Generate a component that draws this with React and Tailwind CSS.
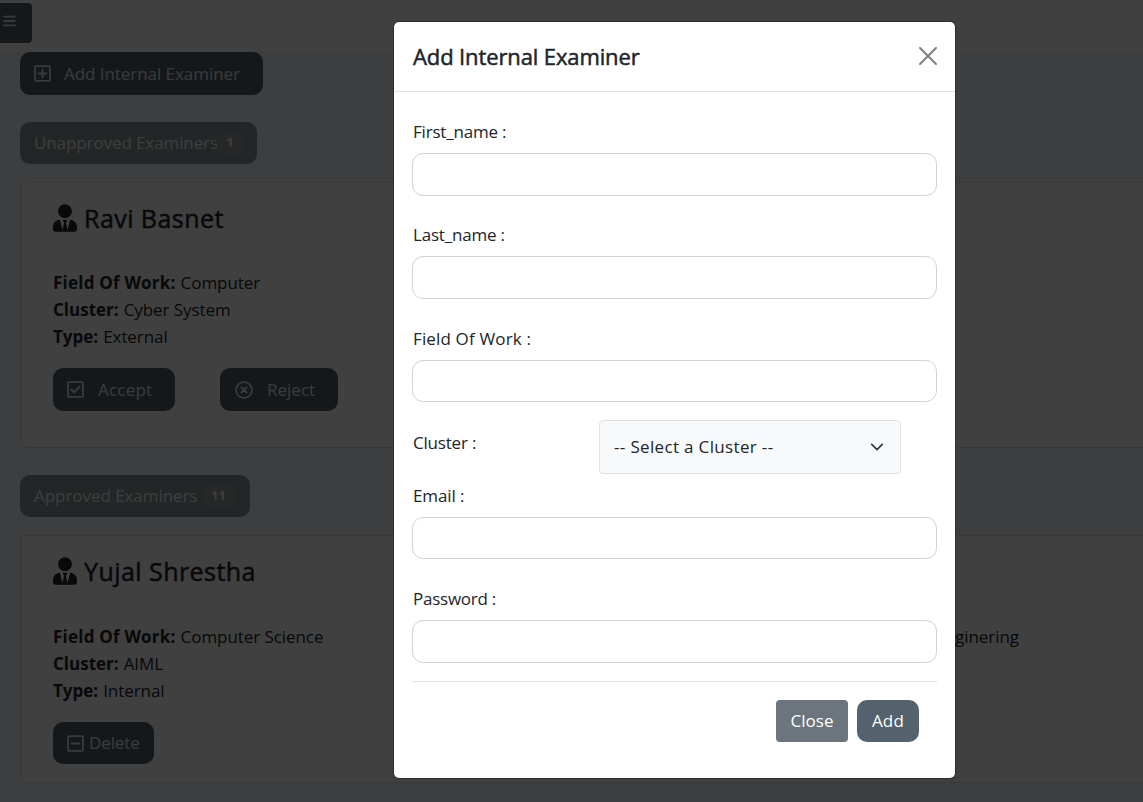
import {
  FaUserTie,
  FaBars,
  FaRegPlusSquare,
  FaRegCheckSquare,
  FaRegMinusSquare,
  FaRegTimesCircle,
} from "react-icons/fa";

const button = "flex items-center rounded-[10px] bg-[#53626c] text-[#e8e8e8]";

function Pill({ className, label, labelClass, count, badgeClass }) {
  return (
    <div className={`flex h-[42px] items-center rounded-[10px] bg-[#8a979d] pl-[14px] text-[#f4f4f4] ${className}`}>
      <span className={labelClass}>{label}</span>
      <span className={`flex h-[23px] items-center justify-center rounded-md bg-[#979da2] text-[13px] font-bold ${badgeClass}`}>{count}</span>
    </div>
  );
}

function Row({ label, labelClass = "", value }) {
  return (
    <p className="flex h-[27px] items-center">
      <b className={`block ${labelClass}`}>{label}</b>
      <span className="ml-[5px] tracking-[-0.07px]">{value}</span>
    </p>
  );
}

function Name({ children }) {
  return (
    <h2 className="flex h-[32px] items-center text-[25px] font-medium">
      <FaUserTie className="mb-[2px] h-[28px] w-[24px] shrink-0" />
      <span className="ml-[7px] tracking-[0.45px] [-webkit-text-stroke:0.5px_currentColor]">{children}</span>
    </h2>
  );
}

function Field({ label, className, labelClass, inputClass }) {
  return (
    <label className={`block ${className}`}>
      <span className={`block h-[27px] pl-px leading-[27px] ${labelClass}`}>{label}</span>
      <input className={`mt-[8px] block w-full rounded-[11px] border border-[#ced4da] bg-white px-3 ${inputClass}`} />
    </label>
  );
}

function Page() {
  return (
    <div className="h-full w-full overflow-hidden bg-[#f4f6f9]">
      <header className="flex h-[52px] items-start bg-white pt-[3px]">
        <div className="flex h-[40px] w-[32px] rounded-r-[4px] bg-[#53626c] pl-[3px] pt-[11px] text-[#e8e8e8]">
          <FaBars className="h-[14px] w-[13px]" />
        </div>
      </header>
      <main className="pl-[20px]">
        <div className={`${button} h-[43px] w-[243px] pl-[14px]`}>
          <FaRegPlusSquare className="h-[19px] w-[17px]" />
          <span className="ml-[13px] tracking-[-0.05px]">Add Internal Examiner</span>
        </div>
        <Pill className="mt-[27px] w-[237px]" label="Unapproved Examiners" labelClass="w-[183px] tracking-[-0.1px]" count="1" badgeClass="w-[26px]" />
        <section className="ml-px mt-[18px] h-[266px] w-[1190px] rounded-[4px] border border-[#e0e0e0] bg-white pl-[31px] pt-[20px]">
          <Name>Ravi Basnet</Name>
          <div className="mt-[34px]">
            <Row label="Field Of Work:" labelClass="tracking-[0.22px]" value="Computer" />
            <Row label="Cluster:" value="Cyber System" />
            <Row label="Type:" value="External" />
          </div>
          <div className="mt-[18px] flex gap-[45px]">
            <div className={`${button} h-[43px] w-[122px] pl-[14px]`}>
              <FaRegCheckSquare className="h-[19px] w-[17px]" />
              <span className="ml-[14px] tracking-[0.2px]">Accept</span>
            </div>
            <div className={`${button} h-[43px] w-[118px] pl-[15px]`}>
              <FaRegTimesCircle className="h-[18px] w-[18px]" />
              <span className="ml-[14px]">Reject</span>
            </div>
          </div>
        </section>
        <Pill className="mt-[27px] w-[230px]" label="Approved Examiners" labelClass="w-[168px] tracking-[-0.05px]" count="11" badgeClass="w-[33px]" />
        <section className="ml-px mt-[18px] h-[248px] w-[1190px] rounded-[4px] border border-[#e0e0e0] bg-white pl-[31px] pt-[20px]">
          <Name>Yujal Shrestha</Name>
          <div className="mt-[35px] flex">
            <div className="w-[674px]">
              <Row label="Field Of Work:" labelClass="tracking-[0.22px]" value="Computer Science" />
              <Row label="Cluster:" value="AIML" />
              <Row label="Type:" value="Internal" />
            </div>
            <Row label="Field Of Work:" value="Computer Enginering" />
          </div>
          <div className={`${button} mt-[18px] h-[42px] w-[101px] pl-[14px]`}>
            <FaRegMinusSquare className="h-[19px] w-[17px]" />
            <span className="ml-[5px] tracking-[-0.1px]">Delete</span>
          </div>
        </section>
      </main>
    </div>
  );
}

function Modal() {
  return (
    <div className="absolute left-[394px] top-[22px] h-[756px] w-[561px] rounded-[5px] bg-white shadow-[0_0_1px_1px_rgba(0,0,0,0.25)]">
      <div className="flex h-[70px] items-center justify-between border-b border-[#dee2e6] px-[18px]">
        <h1 className="pl-px text-[22px] font-medium tracking-[-0.12px] [-webkit-text-stroke:0.5px_currentColor]">Add Internal Examiner</h1>
        <svg className="mb-[2px] h-[18px] w-[18px]" viewBox="0 0 18 18" stroke="#7f7f7f" strokeWidth="2" strokeLinecap="round">
          <path d="M1 1 17 17M17 1 1 17" />
        </svg>
      </div>
      <form className="px-[18px]">
        <Field label="First_name :" className="mt-[26px]" labelClass="tracking-[-0.2px]" inputClass="h-[43px]" />
        <Field label="Last_name :" className="mt-[25px]" labelClass="tracking-[-0.2px]" inputClass="h-[43px]" />
        <Field label="Field Of Work :" className="mt-[26px]" labelClass="tracking-[0.15px]" inputClass="h-[42px]" />
        <div className="mt-[18px] flex h-[54px]">
          <span className="mt-[9px] h-[27px] w-[187px] pl-px leading-[27px] tracking-[-0.2px]">Cluster :</span>
          <div className="flex w-[302px] items-center justify-between rounded-[4px] border border-[#dee2e6] bg-[#f8f9fb] pl-[14px] pr-[16px]">
            <span className="tracking-[0.34px]">-- Select a Cluster --</span>
            <svg className="h-[14px] w-[14px]" viewBox="0 0 16 16" fill="none" stroke="#343a40" strokeWidth="2" strokeLinecap="round" strokeLinejoin="round">
              <path d="m2 5 6 6 6-6" />
            </svg>
          </div>
        </div>
        <Field label="Email :" className="mt-[8px]" labelClass="tracking-[-0.1px]" inputClass="h-[42px]" />
        <Field label="Password :" className="mt-[26px]" labelClass="tracking-[-0.25px]" inputClass="h-[43px]" />
        <div className="mt-[18px] flex justify-end gap-[9px] border-t border-[#dee2e6] pr-[18px] pt-[18px] text-white">
          <button type="button" className="h-[42px] w-[72px] rounded-[4px] bg-[#6c757d]">Close</button>
          <button type="button" className="h-[42px] w-[62px] rounded-[10px] bg-[#53626c] tracking-[0.2px]">Add</button>
        </div>
      </form>
    </div>
  );
}

export default function App() {
  return (
    <div className="relative h-[802px] w-[1143px] overflow-hidden whitespace-nowrap font-['Open_Sans',sans-serif] text-[17px] text-[#212529]">
      <Page />
      <div className="absolute inset-0 bg-black/75" />
      <Modal />
    </div>
  );
}
